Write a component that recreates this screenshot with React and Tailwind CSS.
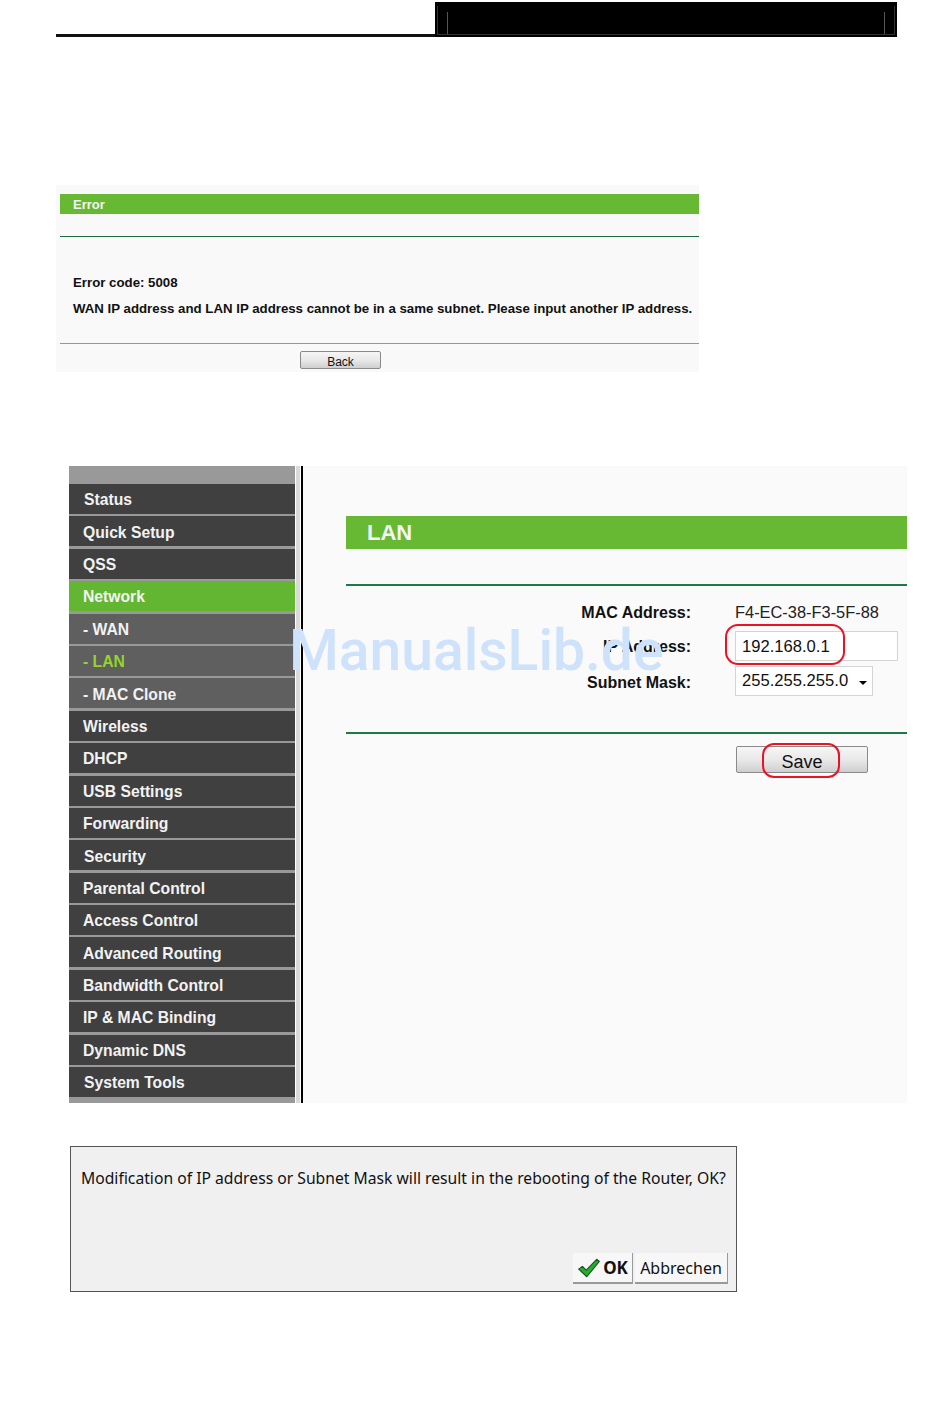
const menu = [
  { label: 'Status', pl: 'pl-[15px]' },
  { label: 'Quick Setup' },
  { label: 'QSS' },
  { label: 'Network', active: true },
  { label: '- WAN', sub: true },
  { label: '- LAN', sub: true, current: true },
  { label: '- MAC Clone', sub: true },
  { label: 'Wireless' },
  { label: 'DHCP' },
  { label: 'USB Settings' },
  { label: 'Forwarding' },
  { label: 'Security', pl: 'pl-[15px]' },
  { label: 'Parental Control' },
  { label: 'Access Control' },
  { label: 'Advanced Routing' },
  { label: 'Bandwidth Control' },
  { label: 'IP & MAC Binding' },
  { label: 'Dynamic DNS' },
  { label: 'System Tools', pl: 'pl-[15px]' },
]

function MenuItem({ item }) {
  let bg = 'bg-[#404040]'
  if (item.active) bg = 'bg-[#63b632]'
  if (item.sub) bg = 'bg-[#5f5f5f]'
  return (
    <div
      className={`h-[30px] mb-[2.4px] flex items-center pt-[2px] text-[15.7px] font-bold ${item.pl || 'pl-[14px]'} ${bg} ${item.current ? 'text-[#94d42c]' : 'text-[#f2f2f2]'}`}
    >
      {item.label}
    </div>
  )
}

function Sidebar() {
  return (
    <div className="w-[226px] h-[637px] bg-[#999999] pt-[18px]">
      {menu.map((item) => (
        <MenuItem key={item.label} item={item} />
      ))}
    </div>
  )
}

function GreyButton({ className, children }) {
  return (
    <div className={`flex items-center justify-center border border-[#8a8a8a] rounded-[2px] bg-gradient-to-b from-[#f6f6f6] via-[#e9e9e9] to-[#cfcfcf] text-[#111] ${className}`}>
      {children}
    </div>
  )
}

function ErrorBlock() {
  return (
    <div className="ml-[56px] mt-[148px] w-[643px] h-[187px] bg-[#f9f9f9] pt-[9px] pl-[4px]">
      <div className="h-[20px] bg-[#67b934] pl-[13px] text-[13px] font-bold text-[#f4f4f4] leading-[21px]">Error</div>
      <div className="mt-[22px] h-[1px] bg-[#1f6a45]" />
      <div className="pl-[13px] text-[13.25px] font-bold text-[#111] whitespace-nowrap">
        <div className="mt-[36px] leading-[20px]">Error code: 5008</div>
        <div className="mt-[6px] leading-[20px]">WAN IP address and LAN IP address cannot be in a same subnet. Please input another IP address.</div>
      </div>
      <div className="mt-[24px] h-[1px] bg-[#6fae8d]" />
      <GreyButton className="ml-[240px] mt-[7px] w-[81px] h-[18px] text-[12px] pt-[3px]">Back</GreyButton>
    </div>
  )
}

function LanPanel() {
  return (
    <div className="flex-1 h-[637px] bg-[#fafafa] pl-[43px] pt-[50px] relative">
      <div className="h-[33px] bg-[#67b934] pl-[21px] text-[22px] font-bold text-[#f6f6f6] leading-[34px]">LAN</div>
      <div className="mt-[35px] h-[2px] bg-[#1d7a45]" />

      <div className="mt-[16px] flex items-center h-[20px] text-[16px]">
        <div className="w-[345px] text-right font-bold text-[#111] pt-[2px]">MAC Address:</div>
        <div className="ml-[44px] text-[16.4px] text-[#222] pt-[1px]">F4-EC-38-F3-5F-88</div>
      </div>
      <div className="mt-[9px] flex items-start h-[30px] text-[16px]">
        <div className="w-[345px] text-right font-bold text-[#111] leading-[32px]">IP Address:</div>
        <div className="ml-[44px] w-[163px] h-[30px] border border-[#d4d4d4] bg-white pl-[6px] text-[16.6px] leading-[29px] text-[#111]">192.168.0.1</div>
      </div>
      <div className="mt-[5px] flex items-start h-[30px] text-[16px]">
        <div className="w-[345px] text-right font-bold text-[#111] leading-[33px]">Subnet Mask:</div>
        <div className="ml-[44px] w-[138px] h-[30px] border border-[#d4d4d4] bg-white pl-[6px] pr-[5px] flex items-center justify-between text-[16.6px] text-[#111]">
          <span className="pt-[1px]">255.255.255.0</span>
          <span className="mt-[4px] border-x-[4px] border-t-[4px] border-x-transparent border-t-black" />
        </div>
      </div>

      <div className="mt-[36px] h-[2px] bg-[#1d7a45]" />
      <GreyButton className="ml-[390px] mt-[12px] w-[132px] h-[27px] text-[18px] pt-[5px]">Save</GreyButton>

      <div className="absolute left-[422px] top-[158px] w-[120px] h-[41px] border-2 border-[#ea1224] rounded-[13px]" />
      <div className="absolute left-[459px] top-[277px] w-[78px] h-[35px] border-2 border-[#ea1224] rounded-[12px]" />
    </div>
  )
}

function RouterPage() {
  return (
    <div className="ml-[69px] mt-[94px] w-[838px] flex relative">
      <Sidebar />
      <div className="ml-[1px] w-[4px] bg-[#dadada]" />
      <div className="ml-[1px] w-[2px] bg-black" />
      <LanPanel />
      <div className="absolute left-[220px] top-[150px] text-[57px] leading-[70px] font-medium text-[#cfe2fb] whitespace-nowrap font-['Roboto',sans-serif]">
        ManualsLib.de
      </div>
    </div>
  )
}

function ConfirmDialog() {
  return (
    <div className="ml-[70px] mt-[43px] w-[667px] h-[146px] border border-[#555] bg-[#f0f0f0] font-['Noto_Sans',sans-serif] text-[#111]">
      <div className="mt-[19px] ml-[10px] text-[15.7px] leading-[24px] whitespace-nowrap">
        Modification of IP address or Subnet Mask will result in the rebooting of the Router, OK?
      </div>
      <div className="mt-[63px] mr-[8px] flex justify-end gap-[2px]">
        <div className="w-[60px] h-[31px] flex items-center justify-center gap-[2px] bg-[#f7f7f7] border-b-2 border-r border-[#999] font-bold text-[17px]">
          <svg width="24" height="20" viewBox="0 0 22 18">
            <path d="M1.5 10 L5 7.5 L8.5 11 L18 1 L20.5 3 L9 17 Z" fill="#22b02c" stroke="#1c4f26" strokeWidth="1" strokeLinejoin="round" />
          </svg>
          OK
        </div>
        <div className="w-[93px] h-[31px] flex items-center justify-center bg-[#f7f7f7] border-b-2 border-r border-[#999] text-[16px]">
          Abbrechen
        </div>
      </div>
    </div>
  )
}

export default function App() {
  return (
    <div className="w-[950px] h-[1408px] bg-white overflow-hidden font-['Liberation_Sans',Arial,sans-serif]">
      <div className="pt-[2px] ml-[56px] w-[841px] flex items-end">
        <div className="flex-1 h-[3px] bg-[#111]" />
        <div className="w-[462px] h-[35px] bg-black px-[2px] pt-[4px] pb-[2px]">
          <div className="h-full border-x border-b border-[#333] px-[9px] pt-[6px]">
            <div className="h-full border-x border-[#555]" />
          </div>
        </div>
      </div>
      <ErrorBlock />
      <RouterPage />
      <ConfirmDialog />
    </div>
  )
}
